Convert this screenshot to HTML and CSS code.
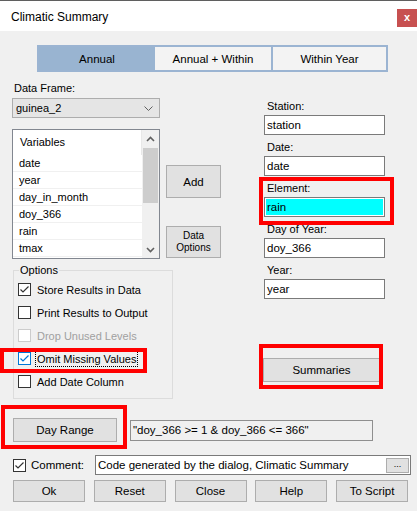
FILE: index.html
```html
<!DOCTYPE html>
<html>
<head>
<meta charset="utf-8">
<link rel="stylesheet" href="styles.css">
</head>
<body>
<div class="window">
  <div class="titlebar">
    <span class="title">Climatic Summary</span>
    <span class="close">x</span>
  </div>
  <div class="content">
    <div class="tabs">
      <div class="tab tab-a selected">Annual</div>
      <div class="tab tab-b">Annual + Within</div>
      <div class="tab tab-c">Within Year</div>
    </div>

    <div class="main">
      <div class="col-left">
        <div class="label">Data Frame:</div>
        <div class="combo">
          <span>guinea_2</span>
          <svg class="chev" width="9" height="5" viewBox="0 0 9 5"><path d="M0.5 0.5 L4.5 4.5 L8.5 0.5" fill="none" stroke="#606060" stroke-width="1"/></svg>
        </div>
        <div class="listbox">
          <div class="list-items">
            <div class="list-head">Variables</div>
            <div class="item">date</div>
            <div class="item">year</div>
            <div class="item">day_in_month</div>
            <div class="item">doy_366</div>
            <div class="item">rain</div>
            <div class="item">tmax</div>
          </div>
          <div class="scrollbar">
            <div class="sb-arrow"><svg width="9" height="6" viewBox="0 0 9 6"><path d="M1 5 L4.5 1.5 L8 5" fill="none" stroke="#606060" stroke-width="1.6"/></svg></div>
            <div class="sb-thumb"></div>
            <div class="sb-space"></div>
            <div class="sb-arrow"><svg width="9" height="6" viewBox="0 0 9 6"><path d="M1 1 L4.5 4.5 L8 1" fill="none" stroke="#606060" stroke-width="1.6"/></svg></div>
          </div>
        </div>
        <div class="options">
          <span class="legend">Options</span>
          <div class="chk-row">
            <span class="box"><svg width="11" height="11" viewBox="0 0 11 11"><path d="M1.5 5.5 L4 8 L9.5 2.5" fill="none" stroke="#333" stroke-width="1.2"/></svg></span>
            <span>Store Results in Data</span>
          </div>
          <div class="chk-row">
            <span class="box"></span>
            <span>Print Results to Output</span>
          </div>
          <div class="chk-row disabled">
            <span class="box"></span>
            <span>Drop Unused Levels</span>
          </div>
          <div class="chk-row">
            <span class="box focus"><svg width="11" height="11" viewBox="0 0 11 11"><path d="M1.5 5.5 L4 8 L9.5 2.5" fill="none" stroke="#0078d7" stroke-width="1.2"/></svg></span>
            <span class="focus-text">Omit Missing Values</span>
          </div>
          <div class="chk-row">
            <span class="box"></span>
            <span>Add Date Column</span>
          </div>
        </div>
      </div>

      <div class="col-mid">
        <div class="btn btn-add">Add</div>
        <div class="btn btn-data">Data<br>Options</div>
      </div>

      <div class="col-right">
        <div class="field">
          <div class="flabel">Station:</div>
          <div class="input">station</div>
        </div>
        <div class="field">
          <div class="flabel">Date:</div>
          <div class="input">date</div>
        </div>
        <div class="field">
          <div class="flabel">Element:</div>
          <div class="input active"><span>rain</span></div>
        </div>
        <div class="field">
          <div class="flabel">Day of Year:</div>
          <div class="input">doy_366</div>
        </div>
        <div class="field">
          <div class="flabel">Year:</div>
          <div class="input">year</div>
        </div>
        <div class="btn btn-summ">Summaries</div>
      </div>
    </div>

    <div class="range-row">
      <div class="btn btn-range">Day Range</div>
      <div class="readonly">"doy_366 &gt;= 1 &amp; doy_366 &lt;= 366"</div>
    </div>

    <div class="comment-row">
      <span class="box"><svg width="11" height="11" viewBox="0 0 11 11"><path d="M1.5 5.5 L4 8 L9.5 2.5" fill="none" stroke="#333" stroke-width="1.2"/></svg></span>
      <span class="comment-label">Comment:</span>
      <div class="comment-input">
        <span>Code generated by the dialog, Climatic Summary</span>
        <span class="dots">...</span>
      </div>
    </div>

    <div class="btn-row">
      <div class="btn btn-bottom">Ok</div>
      <div class="btn btn-bottom">Reset</div>
      <div class="btn btn-bottom">Close</div>
      <div class="btn btn-bottom">Help</div>
      <div class="btn btn-bottom">To Script</div>
    </div>
  </div>

  <div class="mark mark-element"></div>
  <div class="mark mark-omit"></div>
  <div class="mark mark-summ"></div>
  <div class="mark mark-range"></div>
</div>
</body>
</html>
```

FILE: styles.css
```css
* { box-sizing: border-box; }
html, body { margin: 0; padding: 0; }
body {
  width: 417px;
  height: 511px;
  overflow: hidden;
  background: #f0f0f0;
  font-family: "Liberation Sans", Arial, sans-serif;
  font-size: 11px;
  color: #000;
}
.window {
  position: relative;
  width: 417px;
  height: 511px;
  background: #f0f0f0;
}
.titlebar {
  height: 31px;
  background: #fff;
  border-top: 1px solid #5f5f5f;
  display: flex;
  align-items: flex-start;
}
.title {
  font-size: 12px;
  margin-left: 11px;
  margin-top: 9px;
  line-height: 14px;
}
.close {
  margin-left: auto;
  margin-top: 8px;
  width: 20px;
  height: 18px;
  background: #c75050;
  color: #fff;
  font-weight: bold;
  font-size: 11px;
  line-height: 16px;
  text-align: center;
}
.content {
  padding-top: 14px;
}
.tabs {
  margin-left: 37px;
  width: 351px;
  height: 27px;
  display: flex;
  border: 2px solid #9bb4d2;
}
.tab {
  display: flex;
  align-items: center;
  justify-content: center;
  background: #f3f3f3;
  font-size: 11.5px;
}
.tab-a { width: 116px; }
.tab-b { width: 116px; }
.tab-c { flex: 1; border-left: 2px solid #9bb4d2; }
.tab.selected { background: #99b4d1; }

.main {
  display: flex;
  align-items: flex-start;
  height: 327px;
}
.col-left {
  width: 148px;
  margin-left: 12px;
  padding-top: 9px;
  display: flex;
  flex-direction: column;
  align-items: flex-start;
  flex-shrink: 0;
}
.label {
  line-height: 15px;
  margin-left: 2px;
}
.combo {
  margin-top: 2px;
  width: 148px;
  height: 20px;
  background: #e5e5e5;
  border: 1px solid #adadad;
  display: flex;
  align-items: center;
  padding-left: 3px;
  padding-right: 6px;
}
.combo .chev { margin-left: auto; }
.listbox {
  margin-top: 11px;
  width: 148px;
  height: 130px;
  background: #fff;
  border: 1px solid #828790;
  display: flex;
}
.list-items {
  flex: 1;
  display: flex;
  flex-direction: column;
}
.list-head {
  height: 25px;
  line-height: 25px;
  padding-left: 7px;
  border-right: 1px solid #e8e8e8;
}
.item {
  height: 17px;
  line-height: 16px;
  padding-left: 6px;
  border-bottom: 1px solid #f0f0f0;
}
.scrollbar {
  width: 17px;
  background: #f0f0f0;
  display: flex;
  flex-direction: column;
}
.sb-arrow {
  height: 17px;
  display: flex;
  align-items: center;
  justify-content: center;
}
.sb-thumb {
  margin: 1px 1px 0 1px;
  height: 55px;
  background: #cdcdcd;
}
.sb-space { flex: 1; }

.options {
  margin-top: 11px;
  margin-left: 1px;
  width: 160px;
  height: 129px;
  flex-shrink: 0;
  border: 1px solid #dcdcdc;
  display: flex;
  flex-direction: column;
}
.legend {
  align-self: flex-start;
  margin-top: -8px;
  margin-left: 5px;
  padding: 0 1px;
  line-height: 15px;
  background: #f0f0f0;
}
.chk-row {
  height: 23px;
  display: flex;
  align-items: center;
  padding-left: 4px;
}
.box {
  width: 13px;
  height: 13px;
  border: 1px solid #333;
  background: #fff;
  display: inline-flex;
  align-items: center;
  justify-content: center;
  flex-shrink: 0;
  margin-right: 6px;
}
.box.focus { border-color: #0078d7; }
.chk-row.disabled { color: #a0a0a0; }
.chk-row.disabled .box { border-color: #cccccc; }
.focus-text {
  outline: 1px dotted #000;
  padding: 0 1px;
  margin-left: -1px;
  line-height: 14px;
}

.col-mid {
  margin-left: 6px;
  padding-top: 93px;
  display: flex;
  flex-direction: column;
  width: 55px;
  flex-shrink: 0;
}
.btn {
  background: #e1e1e1;
  border: 1px solid #adadad;
  display: flex;
  align-items: center;
  justify-content: center;
  text-align: center;
}
.btn-add { height: 33px; font-size: 11.5px; }
.btn-data { margin-top: 28px; height: 32px; font-size: 10px; line-height: 12px; }

.col-right {
  margin-left: 43px;
  width: 121px;
  padding-top: 27px;
  display: flex;
  flex-direction: column;
  flex-shrink: 0;
}
.field { margin-bottom: 5px; }
.flabel {
  height: 16px;
  line-height: 15px;
  padding-left: 3px;
}
.input {
  height: 20px;
  background: #fff;
  border: 1px solid #7a7a7a;
  line-height: 18px;
  padding-left: 2px;
  font-size: 11.5px;
}
.input.active {
  padding: 1px;
}
.input.active span {
  display: block;
  height: 16px;
  line-height: 16px;
  background: #00ffff;
  padding-left: 1px;
}
.btn-summ {
  margin-top: 54px;
  margin-left: -1px;
  width: 117px;
  height: 24px;
  font-size: 11.5px;
}

.range-row {
  margin-top: 19px;
  display: flex;
  align-items: center;
  padding-left: 13px;
}
.btn-range {
  width: 104px;
  height: 24px;
  font-size: 11.5px;
}
.readonly {
  margin-left: 13px;
  width: 243px;
  height: 21px;
  border: 1px solid #8f8f8f;
  background: #f0f0f0;
  line-height: 19px;
  padding-left: 2px;
  font-size: 11.5px;
}
.comment-row {
  margin-top: 13px;
  height: 20px;
  display: flex;
  align-items: center;
  padding-left: 13px;
}
.comment-label {
  margin-left: -1px;
  width: 64px;
  font-size: 11.5px;
}
.comment-input {
  width: 316px;
  height: 20px;
  background: #fff;
  border: 1px solid #7a7a7a;
  display: flex;
  align-items: center;
  padding-left: 2px;
  padding-right: 1px;
  font-size: 11.5px;
}
.dots {
  margin-left: auto;
  width: 23px;
  height: 15px;
  background: #e1e1e1;
  border: 1px solid #adadad;
  font-size: 9px;
  line-height: 11px;
  text-align: center;
}
.btn-row {
  margin-top: 5px;
  display: flex;
  justify-content: space-between;
  padding-left: 13px;
  padding-right: 9px;
}
.btn-bottom {
  width: 72px;
  height: 22px;
  font-size: 11.5px;
}

.mark {
  position: absolute;
  border: 4px solid #ff0000;
  pointer-events: none;
}
.mark-element { left: 259px; top: 177px; width: 135px; height: 48px; }
.mark-omit { left: 0; top: 348px; width: 147px; height: 25px; }
.mark-summ { left: 259px; top: 344px; width: 124px; height: 45px; }
.mark-range { left: 1px; top: 405px; width: 126px; height: 44px; }
```
